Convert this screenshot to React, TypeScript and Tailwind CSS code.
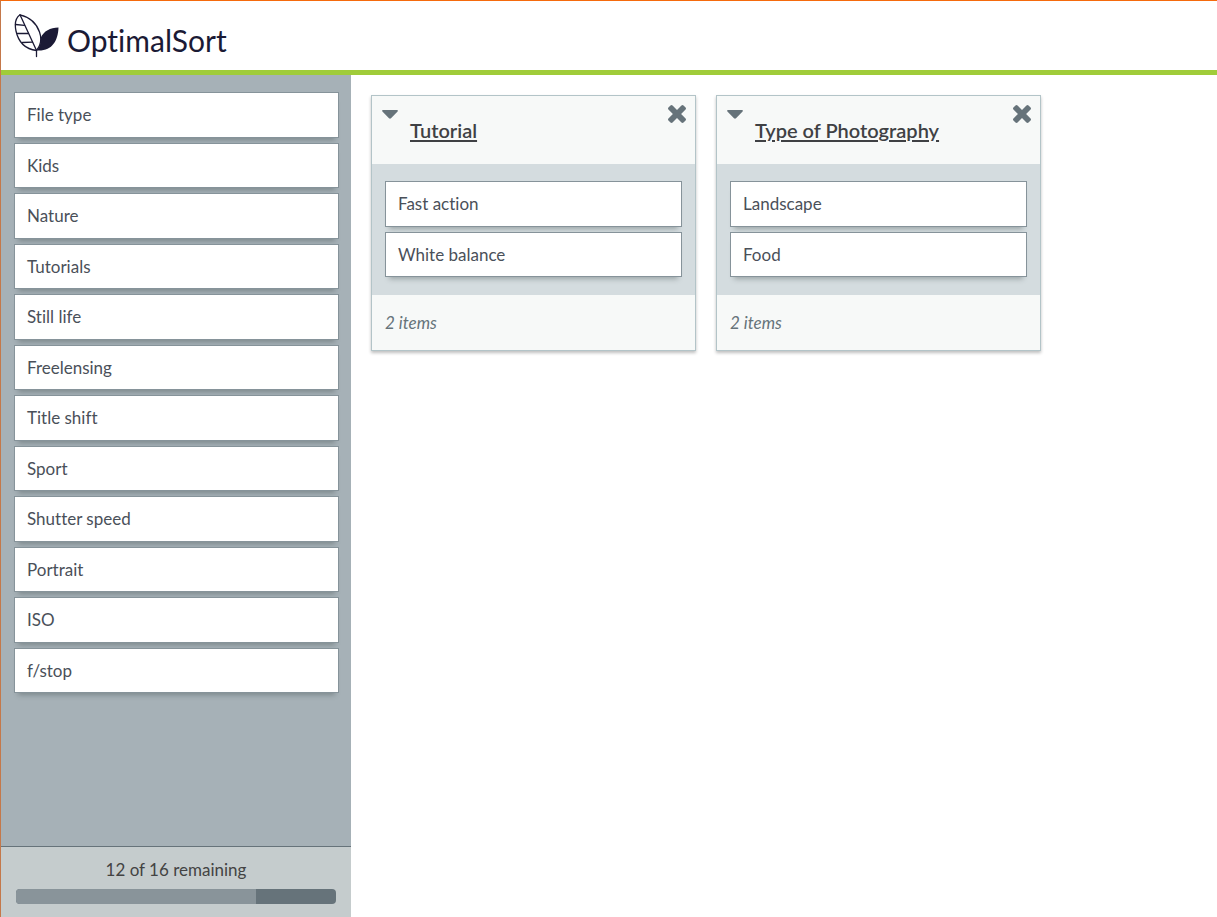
import { useState } from "react";

const initialCards = [
  "File type",
  "Kids",
  "Nature",
  "Tutorials",
  "Still life",
  "Freelensing",
  "Title shift",
  "Sport",
  "Shutter speed",
  "Portrait",
  "ISO",
  "f/stop",
];

const initialGroups = [
  { title: "Tutorial", items: ["Fast action", "White balance"] },
  { title: "Type of Photography", items: ["Landscape", "Food"] },
];

const totalCards = 16;

function LeafLogo() {
  return (
    <svg viewBox="0 0 46 44" className="h-11 w-[46px] shrink-0" fill="none" aria-hidden="true">
      <g stroke="#1b1a35" strokeWidth="1.3" strokeLinecap="round" strokeLinejoin="round">
        <path d="M7 .8C2.500 4 1.500 10 3 17c2 9 8 18 20.500 19.500C28 31 29 25 26.500 18 23.500 9 16 3 7 .8Z" />
        <path d="M7 .8l16.500 35.700" />
        <path d="M2.500 10.500l9 .8M4.500 19.500h11M9.500 28.500l10-.3" />
        <path d="M23.500 36v6.500" />
      </g>
      <path d="M24 36.500c3-4 4-8 3.500-12.500 3.500-7 9.500-10.500 18-10.500C45 27 39 37.500 24 36.500Z" fill="#1b1a35" />
    </svg>
  );
}

function Card({ label }: { label: string }) {
  return (
    <li className="cursor-move border border-[#86939a] bg-white px-3 py-[9px] shadow-[0_6px_5px_-4px_rgba(50,60,60,0.35)]">
      {label}
    </li>
  );
}

function Group({
  title,
  items,
  onRemove,
}: {
  title: string;
  items: string[];
  onRemove: () => void;
}) {
  const [open, setOpen] = useState(true);

  return (
    <section className="w-[325px] border border-[#b3c4c8] bg-[#f7f9f8] shadow-[0_2px_3px_rgba(0,0,0,0.25)]">
      <header className="flex h-[68px] items-start pl-[10px] pr-[9px]">
        <button
          type="button"
          aria-label={`Collapse ${title}`}
          aria-expanded={open}
          onClick={() => setOpen(!open)}
          className="mt-[14px] text-[#66737a]"
        >
          <svg viewBox="0 0 16 9" className="h-[9px] w-4" fill="currentColor">
            <path d="M1 0h14c.9 0 1.200.8.600 1.400L9 8.300c-.6.600-1.400.600-2 0L.4 1.400C-.2.800.1 0 1 0Z" />
          </svg>
        </button>
        <h2 className="ml-3 mt-5 flex-1 text-xl font-semibold leading-7 text-[#3f4144]">
          <button type="button" className="underline decoration-2 underline-offset-2">
            {title}
          </button>
        </h2>
        <button
          type="button"
          aria-label={`Remove ${title}`}
          onClick={onRemove}
          className="mt-[9px] text-[#66737a]"
        >
          <svg viewBox="110 366 1188 1188" className="size-[18px]" fill="currentColor">
            <path d="M1298 1322q0 40-28 68l-136 136q-28 28-68 28t-68-28l-294-294-294 294q-28 28-68 28t-68-28l-136-136q-28-28-28-68t28-68l294-294-294-294q-28-28-28-68t28-68l136-136q28-28 68-28t68 28l294 294 294-294q28-28 68-28t68 28l136 136q28 28 28 68t-28 68l-294 294 294 294q28 28 28 68z" />
          </svg>
        </button>
      </header>
      {open && (
        <ul className="flex flex-col gap-[5px] bg-[#d4dcdf] px-[13px] pb-[18px] pt-[17px]">
          {items.map((item) => (
            <Card key={item} label={item} />
          ))}
        </ul>
      )}
      <p className="px-[13px] pb-[14px] pt-[15px] italic text-[#66737a]">{items.length} items</p>
    </section>
  );
}

export default function App() {
  const [groups, setGroups] = useState(initialGroups);
  const remaining = initialCards.length;

  return (
    <div className="flex min-h-screen flex-col border-l border-t border-l-[#c4784a] border-t-[#f56a0c] bg-white font-['Lato','Liberation_Sans',sans-serif] text-[17px] leading-normal text-[#4a5059] [font-variant-ligatures:none]">
      <header className="flex h-[74px] items-center gap-2 border-b-5 border-[#a0cc3a] pl-3">
        <LeafLogo />
        <h1 className="mt-2 text-[30px] leading-10 text-[#1b1a35]">OptimalSort</h1>
      </header>

      <div className="flex flex-1">
        <aside className="flex w-[350px] shrink-0 flex-col bg-[#a6b1b7]">
          <ul className="flex flex-1 flex-col gap-[5px] pl-[13px] pr-3 pt-[17px]">
            {initialCards.map((card) => (
              <Card key={card} label={card} />
            ))}
          </ul>
          <div className="border-t border-[#66737a] bg-[#c5cccd] px-[15px] pb-[13px] pt-[10px] text-center">
            <p id="remaining" className="text-[#434343]">
              {remaining} of {totalCards} remaining
            </p>
            <div
              role="progressbar"
              aria-labelledby="remaining"
              aria-valuenow={totalCards - remaining}
              aria-valuemax={totalCards}
              className="mt-[7px] h-[15px] overflow-hidden rounded bg-[#66737a]"
            >
              <div
                className="h-full bg-[#89949a]"
                style={{ width: `${(remaining / totalCards) * 100}%` }}
              />
            </div>
          </div>
        </aside>

        <main className="flex flex-1 flex-wrap content-start items-start gap-5 p-5">
          {groups.map((group) => (
            <Group
              key={group.title}
              title={group.title}
              items={group.items}
              onRemove={() => setGroups(groups.filter((g) => g !== group))}
            />
          ))}
        </main>
      </div>
    </div>
  );
}
